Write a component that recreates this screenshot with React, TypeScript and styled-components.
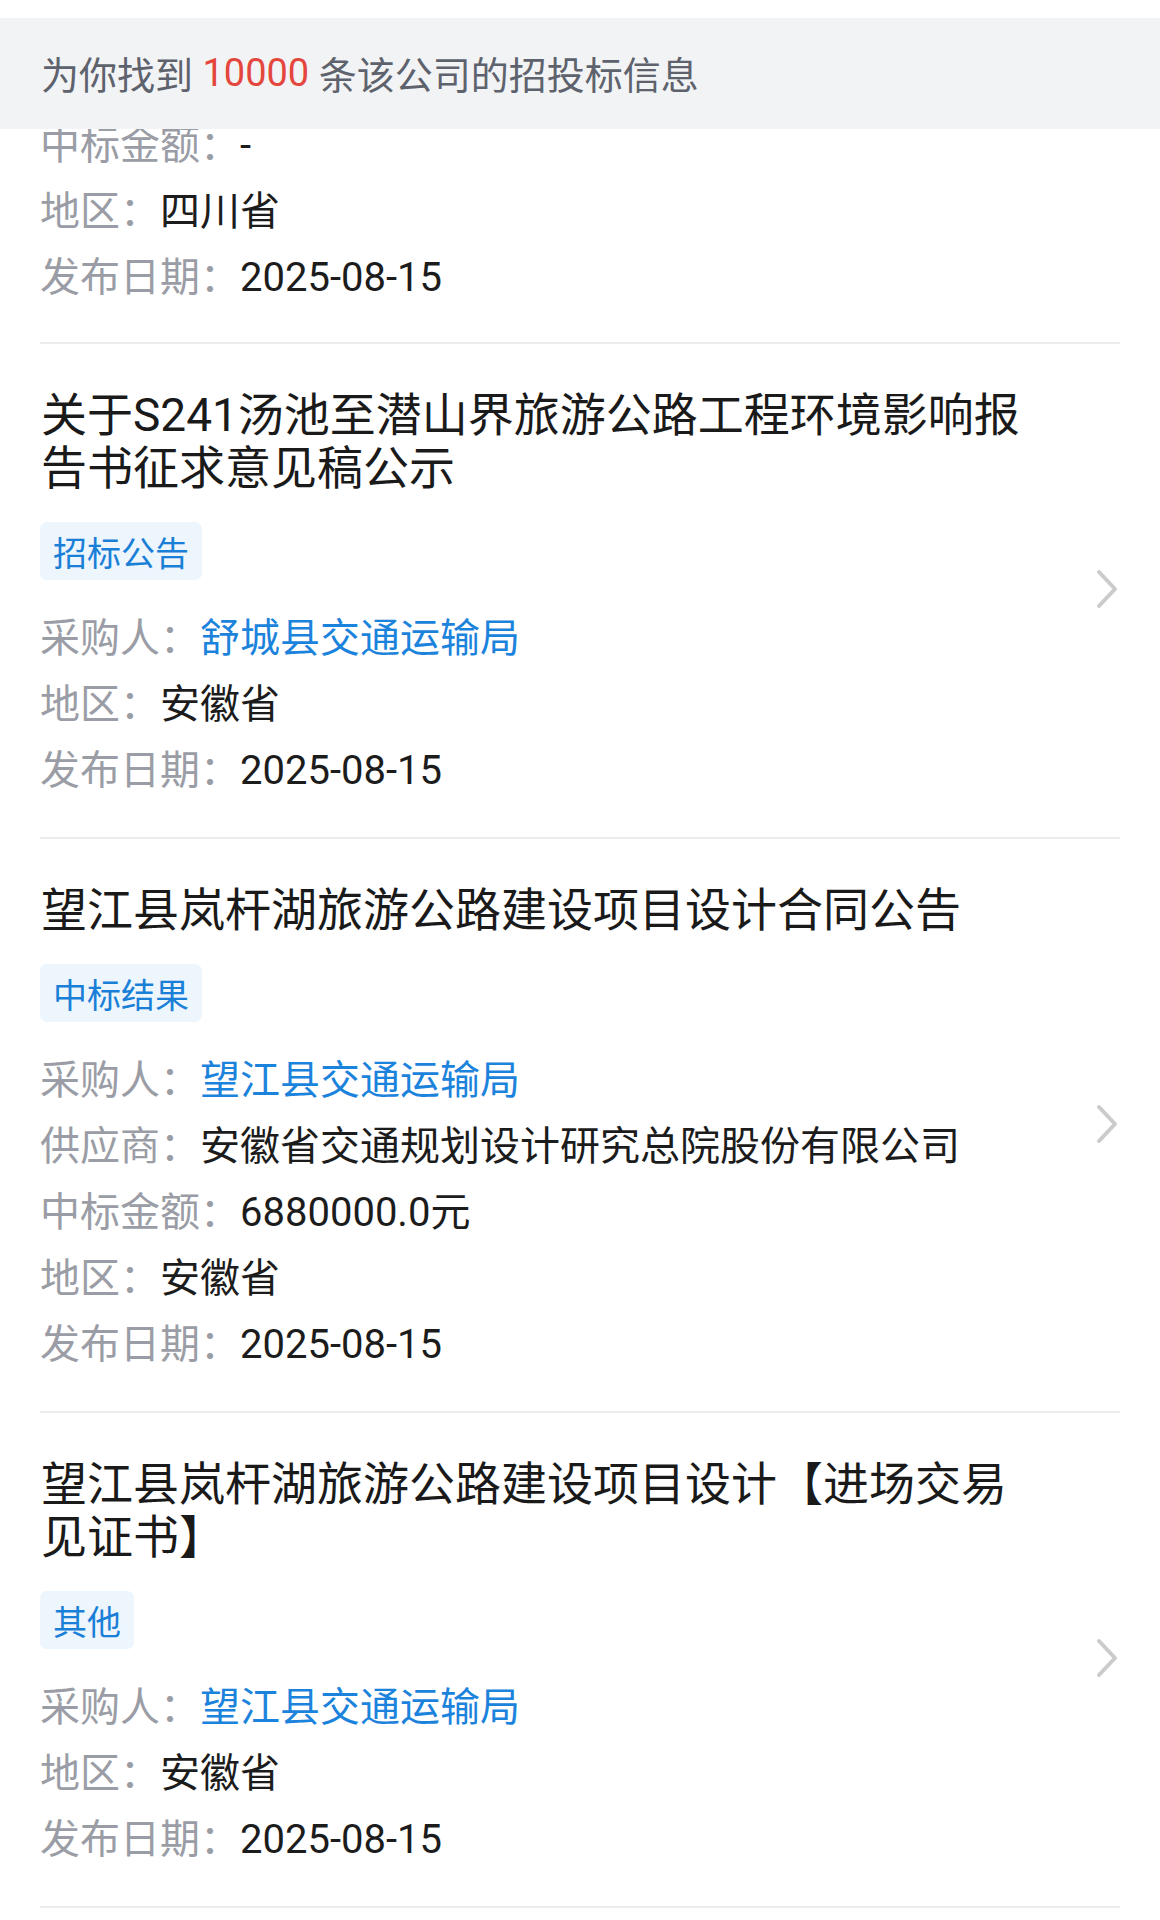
import React from "react";
import styled, { createGlobalStyle } from "styled-components";

const GlobalStyle = createGlobalStyle`
  html, body {
    margin: 0;
    padding: 0;
    background: #ffffff;
  }
  body {
    font-family: Roboto, "Noto Sans CJK SC", "Noto Sans", sans-serif;
    -webkit-font-smoothing: antialiased;
  }
  * { box-sizing: border-box; }
`;

const Page = styled.div`
  position: relative;
  width: 1160px;
  height: 1920px;
  overflow: hidden;
  background: #ffffff;
`;

const Banner = styled.div`
  position: absolute;
  top: 18px;
  left: 0;
  right: 0;
  height: 111px;
  background: #f2f3f5;
  display: flex;
  align-items: center;
  padding-left: 41px;
  padding-bottom: 2px;
  font-size: 38px;
  color: #5d626c;
  z-index: 2;
  white-space: pre;
`;

const Count = styled.span`
  color: #e4463d;
`;

const List = styled.div`
  display: flex;
  flex-direction: column;
  padding: 0 40px;
`;

const Item = styled.div`
  display: flex;
  align-items: center;
  border-bottom: 2px solid #ececec;
`;

const Content = styled.div<{ $partial?: boolean }>`
  flex: 1;
  min-width: 0;
  max-width: 992px;
  padding: ${(p) => (p.$partial ? "113px 0 31px" : "45px 0 33px")};
  display: flex;
  flex-direction: column;
  align-items: flex-start;
`;

const Title = styled.div`
  font-size: 46px;
  line-height: 53px;
  color: #1a1a1a;
  margin-left: 1px;
`;

const Tag = styled.span`
  margin-top: 27px;
  height: 58px;
  padding: 0 13px;
  display: inline-flex;
  align-items: center;
  border-radius: 7px;
  background: #edf5fd;
  color: #1a7fd6;
  font-size: 34px;
`;

const Rows = styled.div<{ $first?: boolean }>`
  margin-top: ${(p) => (p.$first ? "0" : "26px")};
  display: flex;
  flex-direction: column;
`;

const Row = styled.div`
  display: flex;
  font-size: 40px;
  line-height: 66px;
  white-space: nowrap;
`;

const Label = styled.span`
  color: #9a9da5;
`;

const Value = styled.span<{ $link?: boolean }>`
  color: ${(p) => (p.$link ? "#1c83dc" : "#1c1c1c")};
`;

const ChevronWrap = styled.div`
  width: 24px;
  margin-left: auto;
  margin-right: 1px;
  padding-bottom: 3px;
  display: flex;
  align-items: center;
  justify-content: center;
`;

const Chevron = () => (
  <ChevronWrap>
    <svg width="22" height="40" viewBox="0 0 22 40" fill="none">
      <polyline
        points="3,3 19,20 3,37"
        stroke="#cbcbcb"
        strokeWidth="4"
        strokeLinecap="round"
        strokeLinejoin="round"
      />
    </svg>
  </ChevronWrap>
);

type Field = { label: string; value: string; link?: boolean };

type Entry = {
  title: string;
  tag: string;
  fields: Field[];
};

const entries: Entry[] = [
  {
    title: "关于S241汤池至潜山界旅游公路工程环境影响报告书征求意见稿公示",
    tag: "招标公告",
    fields: [
      { label: "采购人：", value: "舒城县交通运输局", link: true },
      { label: "地区：", value: "安徽省" },
      { label: "发布日期：", value: "2025-08-15" },
    ],
  },
  {
    title: "望江县岚杆湖旅游公路建设项目设计合同公告",
    tag: "中标结果",
    fields: [
      { label: "采购人：", value: "望江县交通运输局", link: true },
      { label: "供应商：", value: "安徽省交通规划设计研究总院股份有限公司" },
      { label: "中标金额：", value: "6880000.0元" },
      { label: "地区：", value: "安徽省" },
      { label: "发布日期：", value: "2025-08-15" },
    ],
  },
  {
    title: "望江县岚杆湖旅游公路建设项目设计【进场交易见证书】",
    tag: "其他",
    fields: [
      { label: "采购人：", value: "望江县交通运输局", link: true },
      { label: "地区：", value: "安徽省" },
      { label: "发布日期：", value: "2025-08-15" },
    ],
  },
];

const FieldRows = ({ fields, first }: { fields: Field[]; first?: boolean }) => (
  <Rows $first={first}>
    {fields.map((f) => (
      <Row key={f.label}>
        <Label>{f.label}</Label>
        <Value $link={f.link}>{f.value}</Value>
      </Row>
    ))}
  </Rows>
);

export default function App() {
  return (
    <>
      <GlobalStyle />
      <Page>
        <Banner>
          为你找到 <Count>10000</Count> 条该公司的招投标信息
        </Banner>
        <List>
          <Item>
            <Content $partial>
              <FieldRows
                first
                fields={[
                  { label: "中标金额：", value: "-" },
                  { label: "地区：", value: "四川省" },
                  { label: "发布日期：", value: "2025-08-15" },
                ]}
              />
            </Content>
          </Item>
          {entries.map((e) => (
            <Item key={e.title}>
              <Content>
                <Title>{e.title}</Title>
                <Tag>{e.tag}</Tag>
                <FieldRows fields={e.fields} />
              </Content>
              <Chevron />
            </Item>
          ))}
        </List>
      </Page>
    </>
  );
}
